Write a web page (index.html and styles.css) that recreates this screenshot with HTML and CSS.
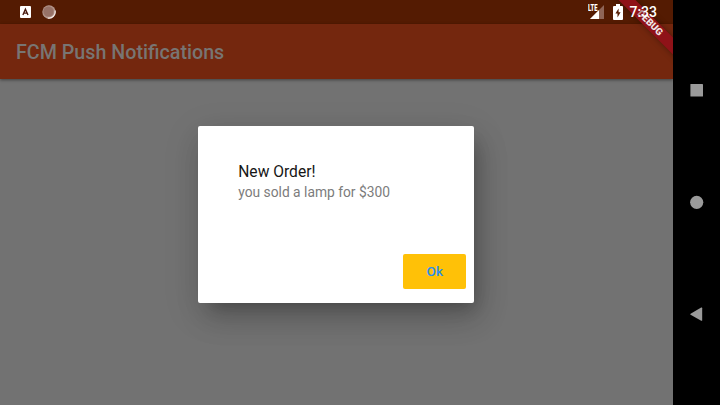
FILE: index.html
```html
<!DOCTYPE html>
<html lang="en">
<head>
<meta charset="utf-8">
<title>FCM Push Notifications</title>
<link rel="stylesheet" href="styles.css">
</head>
<body>
<div class="device">
  <main class="app">
    <header class="status">
      <svg class="notice" width="11" height="12" viewBox="0 0 11 12"><rect width="11" height="12" rx="1" fill="#fff"/><path d="M2.9 9 5.4 3.2 8 9M3.8 7.1h3.3" fill="none" stroke="#4a1b10" stroke-width="1.4"/></svg>
      <svg class="sync" width="14" height="14" viewBox="0 0 14 14"><circle cx="7" cy="7" r="6.7" fill="#b4968c"/><circle cx="6.5" cy="6.5" r="5.3" fill="#977267" stroke="#a98a7f" stroke-width=".8" stroke-dasharray="1 1"/><path d="M13 5.5A6.2 6.2 0 0 1 5.7 13" fill="none" stroke="#f4e9e5" stroke-width="1.2"/></svg>
      <div class="system">
        <div class="signal">
          <span class="lte">LTE</span>
          <svg width="14" height="14" viewBox="0 0 14 14"><path d="M14 0V14H0Z" fill="#8e6557"/><path d="M9 5V14H0Z" fill="#fff"/></svg>
        </div>
        <svg class="battery" width="10" height="16" viewBox="0 0 10 16"><path d="M3 0h4v2h2a1 1 0 0 1 1 1v12a1 1 0 0 1-1 1H1a1 1 0 0 1-1-1V3a1 1 0 0 1 1-1h2Z" fill="#fff"/><path d="M5.600 4.500 2.400 9.500h2.100V13.500L7.600 8.300H5.600Z" fill="#541b02"/></svg>
        <time class="clock">7:33</time>
      </div>
    </header>
    <div class="appbar"><h1>FCM Push Notifications</h1></div>
    <div class="content">
      <section class="dialog">
        <h2>New Order!</h2>
        <p>you sold a lamp for $300</p>
        <button class="ok">Ok</button>
      </section>
    </div>
    <div class="banner"><span class="covered">D</span>EBUG</div>
  </main>
  <nav class="keys">
    <svg width="14" height="14" viewBox="0 0 14 14"><rect x=".4" y=".9" width="12.6" height="12.6" rx=".6"/></svg>
    <svg width="14" height="14" viewBox="0 0 14 14"><circle cx="6.700" cy="7.300" r="6.600"/></svg>
    <svg width="14" height="14" viewBox="0 0 14 14"><path d="M.6 6.800 11.200.6q1-.5 1 .6V13.200q0 1-1 .5L.6 7.800q-.6-.5 0-1Z"/></svg>
  </nav>
</div>
</body>
</html>
```
FILE: styles.css
```css
* { box-sizing: border-box; }
body { margin: 0; font-family: Roboto, sans-serif; }
.device { display: flex; width: 720px; height: 405px; overflow: hidden; background: #000; }
.app { position: relative; display: flex; flex-direction: column; width: 673px; overflow: hidden; background: #727272; }
.status { display: flex; align-items: center; height: 23.5px; padding: 0 16px 0 20px; background: #541b02; color: #fff; }
.sync { margin-left: 11px; }
.system { position: relative; z-index: 3; display: flex; align-items: center; height: 24px; margin-left: auto; }
.signal { position: relative; width: 17px; height: 14px; padding-left: 3px; margin-right: 8px; }
.signal svg { display: block; }
.lte { position: absolute; z-index: 1; left: 1px; top: -1px; font-size: 9px; line-height: 9px; font-weight: 900; transform: scaleX(.65); transform-origin: left; }
.battery { margin-left: 1px; }
.clock { margin: 0 0 0 6.500px; font-size: 14px; font-weight: 500; line-height: 20px; }
.appbar { position: relative; display: flex; align-items: center; height: 55px; padding: 3px 0 0 16px; background: #74270e; box-shadow: 0 1px 3px rgba(0, 0, 0, .45); }
h1 { margin: 0; color: #787573; font-size: 19.7px; font-weight: 500; line-height: 24px; }
.content { display: flex; flex: 1; justify-content: center; padding: 47px .5px 0 0; }
.dialog { display: flex; flex-direction: column; width: 276px; height: 177px; padding: 36px 8px 13.5px 40px; border-radius: 2px; background: #fff; box-shadow: 7px 11px 15px -7px rgba(0, 0, 0, .2), 7px 16px 30px 0 rgba(0, 0, 0, .14), 0 9px 36px 2px rgba(0, 0, 0, .1); }
h2 { margin: 0; color: #161616; font-size: 15.6px; font-weight: 400; line-height: 20px; }
p { margin: 0; color: #7c7c7c; font-size: 13.8px; line-height: 20px; }
.ok { align-self: flex-end; width: 63px; height: 35.5px; margin-top: auto; padding: 0; border: 0; border-radius: 2px; background: #ffc107; color: #2a8ef0; font: 500 13.5px/35px Roboto, sans-serif; }
.banner { position: absolute; z-index: 2; left: 599.5px; top: 16.5px; width: 100px; height: 12px; background: #8f1218; color: #f0e6e6; box-shadow: 0 0 6px rgba(0, 0, 0, .35); font-size: 9.8px; font-weight: 900; line-height: 12px; text-align: center; transform: rotate(45deg); }
.covered { color: #b98e90; }
.keys { display: flex; flex-direction: column; justify-content: space-between; align-items: center; width: 47px; padding: 83px 0 84px; }
.keys svg { fill: #9a9a9a; }
```
